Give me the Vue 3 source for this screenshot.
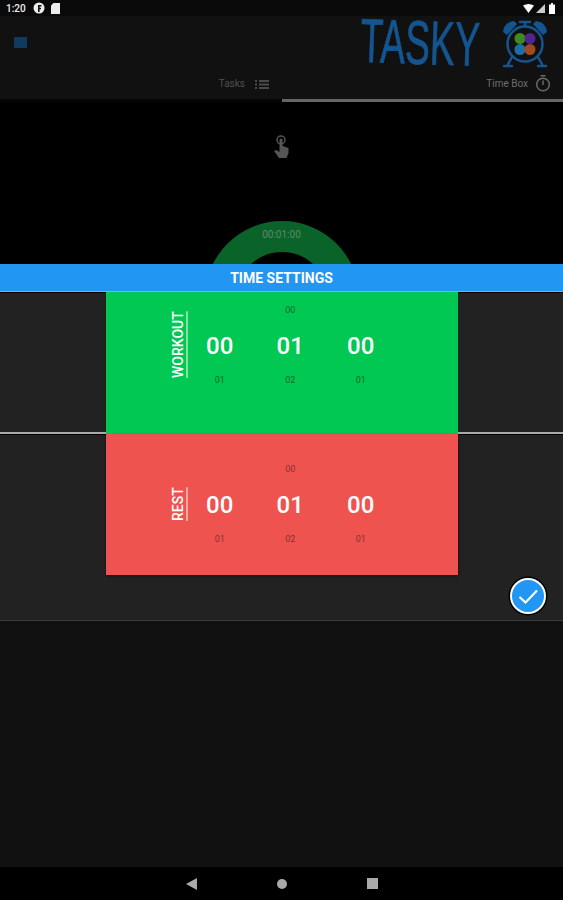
<script setup>
const timers = [
  { name: "WORKOUT", kind: "green" },
  { name: "REST", kind: "red" },
];
const columns = [
  { above: "", value: "00", below: "01" },
  { above: "00", value: "01", below: "02" },
  { above: "", value: "00", below: "01" },
];
</script>

<template>
  <div class="page">
    <div class="status">
      <span class="clock">1:20</span>
      <svg class="status-icon first" viewBox="0 0 12 12" width="12" height="12">
        <circle cx="6" cy="6" r="5.5" fill="#eee" />
        <path d="M5 3h3.5v1.6H6.6v1.2H8v1.5H6.6V10H5z" fill="#111" />
      </svg>
      <svg class="status-icon" viewBox="0 0 9 11" width="9" height="11">
        <path d="M2.5 0H9v11H0V2.5z" fill="#eee" />
      </svg>
      <span class="spacer"></span>
      <svg viewBox="0 0 33 11" width="33" height="11">
        <path d="M0 2.5Q5.5-.5 11 2.5L5.5 10z" fill="#fff" />
        <path d="M22 1v9h-9z" fill="#ccc" />
        <path d="M26 1.5h2V0h2v1.500h2V11h-6z" fill="#fff" />
      </svg>
    </div>

    <header class="toolbar">
      <div class="toolbar-top">
        <span class="menu"></span>
        <span class="spacer"></span>
        <span class="logo">TASKY</span>
        <svg class="alarm" viewBox="0 0 48 50" width="48" height="50">
          <g fill="none" stroke="#14558f" stroke-width="2.500">
            <circle cx="24" cy="25" r="17.500" />
            <path d="M11 38l-5 9M37 38l5 9M3 47h8M37 47h8M24 7V3M19 3h10" stroke-linecap="round" />
          </g>
          <path d="M2 13Q3 3 13 2l3 3L6 16z" fill="#14558f" />
          <path d="M46 13Q45 3 35 2l-3 3 10 11z" fill="#14558f" />
          <circle cx="19" cy="19.500" r="5.500" fill="#3f8a1c" />
          <circle cx="29" cy="19.500" r="5.500" fill="#512490" />
          <circle cx="19" cy="30.500" r="5.500" fill="#1c70a8" />
          <circle cx="29" cy="30.500" r="5.500" fill="#a34a1c" />
        </svg>
      </div>
      <nav class="tabs">
        <div class="tab">
          <span>Tasks</span>
          <svg viewBox="0 0 14 10" width="14" height="10">
            <path d="M0 1h2v2H0zM4 1h10v2H4zM0 4.500h2v2H0zM4 4.500h10v2H4zM0 8h2v2H0zM4 8h10v2H4z" fill="#4a4a4a" />
          </svg>
        </div>
        <div class="tab active">
          <span>Time Box</span>
          <svg viewBox="0 0 16 17" width="16" height="17">
            <circle cx="8" cy="9.500" r="6.300" fill="none" stroke="#6a6a6a" stroke-width="1.500" />
            <path d="M5.500 .8h5M8 5.500v4.500" stroke="#6a6a6a" stroke-width="1.500" fill="none" />
          </svg>
        </div>
      </nav>
    </header>

    <main class="stage">
      <svg class="hand" viewBox="0 0 16 24" width="16" height="24">
        <circle cx="7" cy="5" r="4" fill="none" stroke="#555" stroke-width="1.500" />
        <path d="M5.500 5a1.500 1.500 0 0 1 3 0v6l6 2v5l-2 5H5l-5-7 2-1 3.500 2z" fill="#555" />
      </svg>
      <div class="ring"><span>00:01:00</span></div>
    </main>

    <section class="dialog">
      <h1 class="dialog-title">TIME SETTINGS</h1>
      <div v-for="t in timers" :key="t.name" class="row" :class="'row-' + t.kind">
        <div class="card" :class="t.kind">
          <span class="timer-name">{{ t.name }}</span>
          <div v-for="(c, i) in columns" :key="i" class="picker">
            <span class="small">{{ c.above }}</span>
            <span class="digits">{{ c.value }}</span>
            <span class="small below">{{ c.below }}</span>
          </div>
        </div>
      </div>
      <div class="dialog-foot">
        <button class="confirm">
          <svg viewBox="0 0 24 24" width="24" height="24">
            <path d="M3.500 13l6 5.500L21 6.500" fill="none" stroke="#fff" stroke-width="2.200" />
          </svg>
        </button>
      </div>
    </section>

    <div class="rest"></div>

    <footer class="navbar">
      <svg viewBox="0 0 11 12" width="11" height="12"><path d="M0 6l11-6v12z" fill="#aaa" /></svg>
      <span class="nav-dot"></span>
      <span class="nav-square"></span>
    </footer>
  </div>
</template>

<style>
html,
body {
  margin: 0;
  background: #111;
}
</style>

<style scoped>
.page {
  width: 563px;
  height: 900px;
  display: flex;
  flex-direction: column;
  overflow: hidden;
  background: #111;
  font-family: Roboto, "Liberation Sans", sans-serif;
}
.spacer {
  flex: 1;
}

.status {
  height: 16px;
  display: flex;
  align-items: center;
  padding: 0 7px 0 6px;
  background: #0a0a0a;
}
.clock {
  color: #eee;
  font-size: 10px;
  font-weight: 500;
}
.status-icon {
  margin-left: 6px;
}
.status-icon.first {
  margin-left: 7px;
}

.toolbar {
  height: 86px;
  box-sizing: border-box;
  display: flex;
  flex-direction: column;
  background: #111;
}
.toolbar-top {
  height: 60px;
  display: flex;
  align-items: flex-start;
  padding: 0 14px;
}
.menu {
  width: 13px;
  height: 11px;
  margin-top: 21px;
  background: #123a5e;
}
.logo {
  margin: 0 21px 0 0;
  color: #14558f;
  font-family: "Liberation Sans", sans-serif;
  font-size: 62px;
  line-height: 58px;
  -webkit-text-stroke: 0.8px #14558f;
  transform: rotate(2deg) scaleX(0.6);
  transform-origin: right center;
}
.alarm {
  margin: 3px 0 0 0;
}

.tabs {
  flex: 1;
  display: flex;
}
.tab {
  flex: 1;
  box-sizing: border-box;
  display: flex;
  align-items: center;
  justify-content: flex-end;
  gap: 10px;
  padding: 0 13px 7px 0;
  color: #505050;
  font-size: 10px;
  border-bottom: 3px solid #050505;
}
.tab.active {
  color: #6e6e6e;
  padding-right: 12px;
  gap: 7px;
  border-bottom-color: #666;
}

.stage {
  height: 162px;
  overflow: hidden;
  display: flex;
  flex-direction: column;
  align-items: center;
  background: #000;
}
.hand {
  flex: none;
  margin-top: 33px;
}
.ring {
  box-sizing: border-box;
  flex: none;
  width: 154px;
  height: 154px;
  margin-top: 62px;
  border: 31px solid #0a642a;
  border-radius: 50%;
  display: flex;
  justify-content: center;
}
.ring span {
  margin-top: -23px;
  height: 12px;
  color: #5d8a69;
  font-size: 10px;
  line-height: 12px;
}

.dialog {
  background: #222;
  border-bottom: 1px solid #3a3a3a;
}
.dialog-title {
  margin: 0;
  height: 27px;
  line-height: 29px;
  text-align: center;
  color: #fff;
  background: #2196f3;
  border-bottom: 1px solid #6cb6f5;
  font-size: 14px;
  font-weight: 700;
}
.row {
  display: flex;
  justify-content: center;
}
.row-green {
  height: 140px;
  border-bottom: 2px solid #aaa;
  box-shadow: inset 0 1px 0 #000;
}
.row-red {
  height: 141px;
  box-shadow: inset 0 1px 0 #000;
}
.card {
  width: 352px;
  box-sizing: border-box;
  display: flex;
  align-items: flex-start;
  padding-left: 64px;
}
.card.green {
  background: #00c853;
  margin-bottom: -2px;
  padding-top: 12px;
  color: #0a6a2c;
}
.card.red {
  background: #ef5350;
  padding-top: 29px;
  color: #8a2f2d;
  box-shadow: 0 1px 2px rgba(0, 0, 0, 0.6);
}
.timer-name {
  width: 15px;
  height: 82px;
  display: flex;
  align-items: center;
  justify-content: center;
  writing-mode: vertical-rl;
  transform: rotate(180deg);
  color: #fff;
  font-size: 14px;
  font-weight: 500;
  text-decoration: underline;
  text-underline-offset: 1px;
}
.picker {
  width: 70.5px;
  display: flex;
  flex-direction: column;
  align-items: center;
}
.small {
  height: 12px;
  line-height: 12px;
  font-size: 9px;
}
.small.below {
  margin-top: 4px;
}
.digits {
  height: 48px;
  margin-top: 6px;
  line-height: 48px;
  color: #fff;
  font-size: 24px;
  font-weight: 500;
}

.dialog-foot {
  height: 45px;
  display: flex;
  justify-content: flex-end;
  align-items: flex-start;
  padding: 3px 17px 0 0;
  box-sizing: border-box;
}
.confirm {
  width: 36px;
  height: 36px;
  padding: 0;
  display: flex;
  align-items: center;
  justify-content: center;
  box-sizing: border-box;
  border: 2px solid #fff;
  border-radius: 50%;
  background: #2196f3;
  box-shadow: 0 0 0 1.5px #000;
}

.rest {
  flex: 1;
  background: #111;
}

.navbar {
  height: 33px;
  box-sizing: border-box;
  display: flex;
  align-items: center;
  justify-content: center;
  gap: 80px;
  background: #000;
}
.nav-dot {
  width: 10px;
  height: 10px;
  border-radius: 50%;
  background: #aaa;
}
.nav-square {
  width: 11px;
  height: 11px;
  background: #aaa;
}
</style>
